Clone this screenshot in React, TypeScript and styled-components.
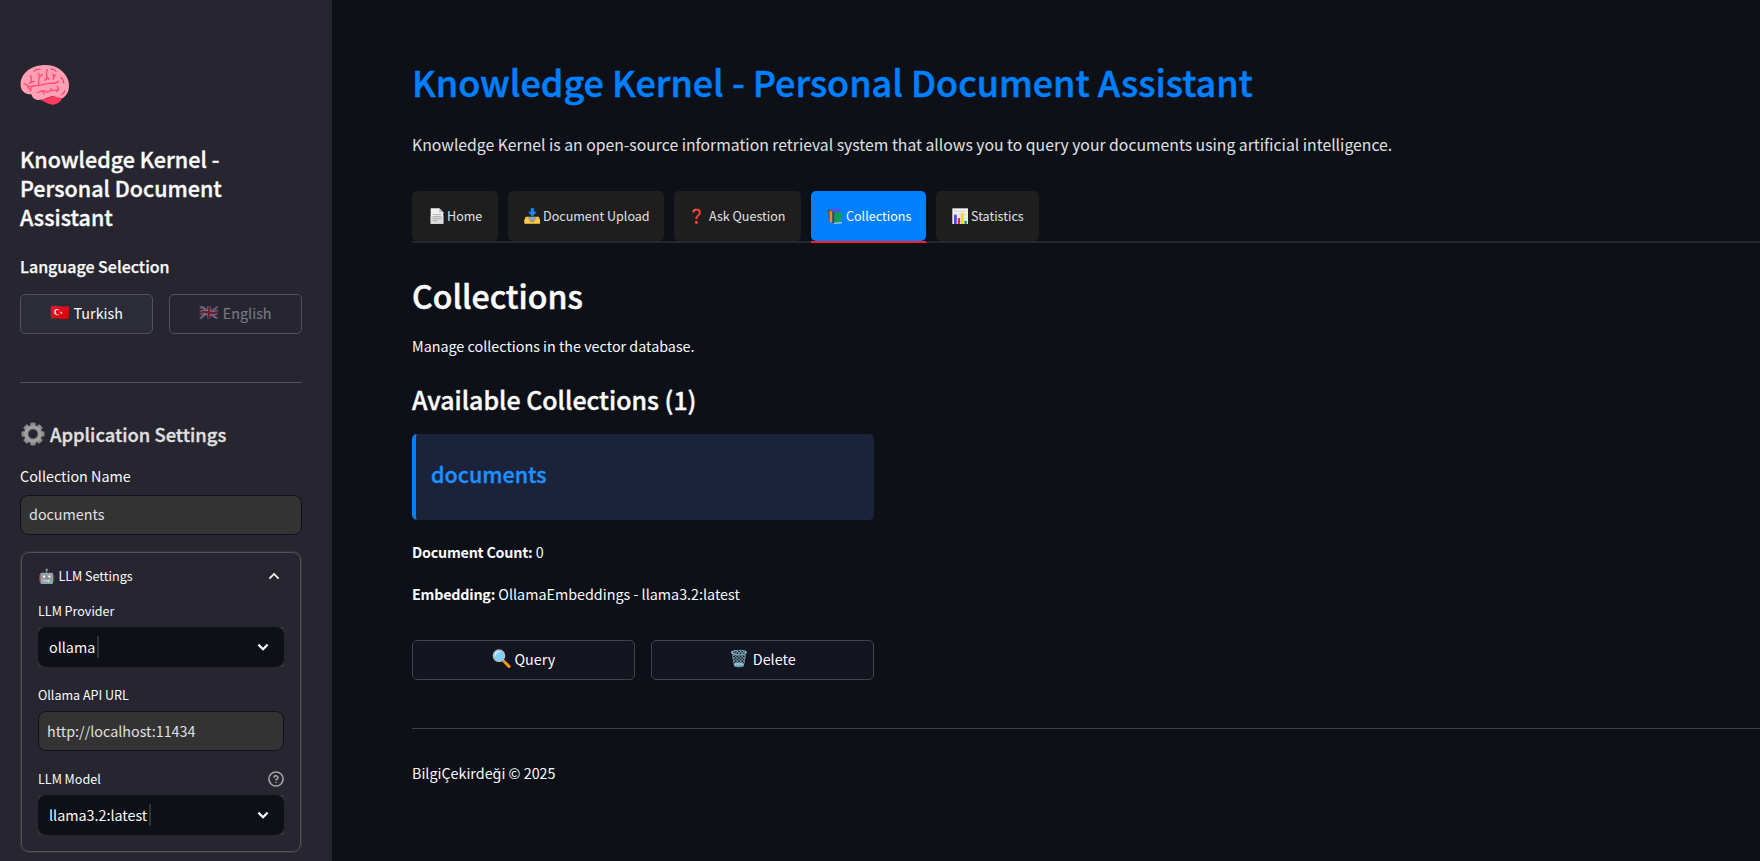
import React from 'react';
import styled, { createGlobalStyle } from 'styled-components';

const GlobalStyle = createGlobalStyle`
  * { box-sizing: border-box; }
  body {
    margin: 0;
    background: #0d1017;
    color: #fafafa;
    font-family: "Noto Sans CJK SC", "Noto Sans", sans-serif;
    overflow: hidden;
  }
  h1, h2, h3, h4, p { margin: 0; }
`;

const Page = styled.div`
  display: flex;
  width: 100%;
  height: 861px;
  overflow: hidden;
`;

const Sidebar = styled.aside`
  flex: 0 0 332px;
  height: 861px;
  padding: 56px 30px 0 20px;
  background: #272630;
`;

const Emoji = styled.span<{ $size: number }>`
  font-family: "Noto Color Emoji", sans-serif;
  font-size: ${(p) => p.$size}px;
  line-height: 1;
  font-weight: 400;
`;

const Logo = styled.div`
  height: 57px;
  display: flex;
  align-items: center;
`;

const SideTitle = styled.h1`
  margin-top: 32px;
  font-size: 21.5px;
  line-height: 28.8px;
  font-weight: 500;
  -webkit-text-stroke: 0.35px currentColor;
`;

const SideSubtitle = styled.h4`
  margin-top: 22.5px;
  font-size: 16px;
  line-height: 24px;
  font-weight: 500;
  -webkit-text-stroke: 0.25px currentColor;
`;

const ButtonRow = styled.div<{ $top: number; $width?: number }>`
  display: grid;
  grid-template-columns: 1fr 1fr;
  gap: 16px;
  width: ${(p) => (p.$width ? `${p.$width}px` : '100%')};
  margin-top: ${(p) => p.$top}px;
`;

const Button = styled.button<{ $tone: 'raised' | 'muted' | 'plain' }>`
  display: flex;
  align-items: center;
  justify-content: center;
  height: 40px;
  padding: 0 0 2px;
  border: 1px solid ${(p) => (p.$tone === 'plain' ? '#41434b' : '#52525c')};
  border-radius: 5px;
  background: ${(p) => (p.$tone === 'raised' ? '#2b2c36' : p.$tone === 'plain' ? '#131520' : 'transparent')};
  color: #fafafa;
  font-family: inherit;
  font-size: 14.33px;
  line-height: 24px;
`;

const ButtonLabel = styled.span<{ $muted?: boolean }>`
  display: flex;
  align-items: center;
  gap: 3.5px;
  opacity: ${(p) => (p.$muted ? 0.4 : 1)};
`;

const Divider = styled.hr<{ $color: string }>`
  height: 1px;
  margin: 48px 0 0;
  border: 0;
  background: ${(p) => p.$color};
`;

const SettingsTitle = styled.h3`
  display: flex;
  align-items: center;
  gap: 5px;
  margin: 37px 0 0 1px;
  font-size: 18.4px;
  line-height: 28px;
  font-weight: 500;
  -webkit-text-stroke: 0.3px currentColor;
  color: #e0e0e0;
`;

const Label = styled.label<{ $small?: boolean }>`
  display: flex;
  align-items: center;
  justify-content: space-between;
  font-size: ${(p) => (p.$small ? 12.55 : 14.33)}px;
  line-height: ${(p) => (p.$small ? 22 : 24)}px;
`;

const CollectionField = styled.div`
  display: flex;
  flex-direction: column;
  gap: 6.5px;
  margin-top: 16.5px;
`;

const TextInput = styled.div<{ $line?: number }>`
  height: 40px;
  padding: 0 8px;
  border: 1px solid #10121a;
  border-radius: 8px;
  background: #333;
  color: #e0e0e0;
  font-size: 14.33px;
  line-height: ${(p) => p.$line ?? 36}px;
`;

const Expander = styled.section`
  height: 302px;
  margin-top: 16px;
  border: 1px solid #333338;
  border-radius: 8px;
`;

const ExpanderBody = styled.div`
  height: 300px;
  padding: 12.5px 16px 0;
  border: 1px solid #52525b;
  border-radius: 8px;
`;

const ExpanderHeader = styled.div`
  display: flex;
  align-items: center;
  justify-content: space-between;
  padding-right: 4px;
  font-size: 12.55px;
  line-height: 22px;
`;

const Inline = styled.span`
  display: flex;
  align-items: center;
  gap: 3px;
`;

const Fields = styled.div`
  display: flex;
  flex-direction: column;
  gap: 17.5px;
  margin-top: 13px;
`;

const Field = styled.div`
  display: flex;
  flex-direction: column;
  gap: 4.5px;
`;

const SelectFrame = styled.div`
  height: 40px;
  background: #333;
`;

const SelectBox = styled.div`
  display: flex;
  align-items: center;
  height: 40px;
  padding: 0 15px 0 11px;
  border-radius: 8px;
  background: #0d1017;
  font-size: 14.33px;
  line-height: 24px;
`;

const Caret = styled.span`
  width: 2px;
  height: 22px;
  margin: 0 auto 0 2px;
  background: #333;
`;

const Main = styled.main`
  flex: 1;
  min-width: 0;
  padding: 57px 0 0 80px;
`;

const PageTitle = styled.h1`
  font-size: 35.9px;
  line-height: 48px;
  font-weight: 500;
  -webkit-text-stroke: 0.5px currentColor;
  color: #0080ff;
  white-space: nowrap;
`;

const Lead = styled.p`
  margin-top: 26px;
  font-size: 15.76px;
  line-height: 28px;
  color: #e0e0e0;
`;

const Tabs = styled.nav`
  display: flex;
  gap: 10px;
  margin-top: 32px;
  border-bottom: 2px solid #262730;
`;

const Tab = styled.div<{ $width: number; $active?: boolean }>`
  position: relative;
  display: flex;
  align-items: center;
  gap: 3px;
  width: ${(p) => p.$width}px;
  height: 50px;
  padding: 0 0 0 15px;
  border-radius: 5px;
  background: ${(p) => (p.$active ? '#0080ff' : '#1e1e1e')};
  color: ${(p) => (p.$active ? '#fff' : '#e0e0e0')};
  font-size: 12.55px;
  line-height: 22px;
  white-space: nowrap;
  &::after {
    content: '';
    display: ${(p) => (p.$active ? 'block' : 'none')};
    position: absolute;
    left: 0;
    right: 0;
    bottom: -2px;
    height: 2px;
    background: #ff1a2e;
  }
`;

const TabIcon = styled.span`
  display: flex;
  align-items: center;
  justify-content: flex-end;
  width: 17px;
  height: 17px;
`;

const SectionTitle = styled.h2`
  margin-top: 30.5px;
  font-size: 32.05px;
  line-height: 43px;
  font-weight: 500;
  -webkit-text-stroke: 0.5px currentColor;
`;

const Paragraph = styled.p<{ $top: number }>`
  margin-top: ${(p) => p.$top}px;
  font-size: 14.33px;
  line-height: 24px;
  strong { font-weight: 700; letter-spacing: -0.23px; }
`;

const ListTitle = styled.h3`
  margin-top: 24px;
  font-size: 24.9px;
  line-height: 34px;
  font-weight: 500;
  -webkit-text-stroke: 0.4px currentColor;
`;

const CollectionCard = styled.article`
  width: 462px;
  height: 86px;
  margin-top: 18px;
  padding: 25px 15px 0;
  border-left: 4px solid #0080ff;
  border-radius: 5px;
  background: #1a233a;
`;

const CardTitle = styled.h4`
  font-size: 21.5px;
  line-height: 29px;
  font-weight: 500;
  -webkit-text-stroke: 0.35px currentColor;
  color: #1e90ff;
`;

const Chevron = ({ up }: { up?: boolean }) => (
  <svg width="12" height="8" viewBox="0 0 12 8" fill="none" stroke="#fafafa" strokeWidth={up ? 1.7 : 2.2}>
    <path d={up ? 'M1.4 6.6 6 2l4.6 4.6' : 'M1.4 1.6 6 6.2l4.6-4.6'} />
  </svg>
);

const HelpIcon = () => (
  <svg width="16" height="16" viewBox="0 0 24 24" fill="none" stroke="#a3a3aa" strokeWidth="2.4" strokeLinecap="round" strokeLinejoin="round">
    <circle cx="12" cy="12" r="10.6" />
    <path d="M9.1 9a3 3 0 0 1 5.83 1c0 2-3 3-3 3" />
    <path d="M12 17h.01" />
  </svg>
);

const BrainIcon = () => (
  <svg width="50" height="42" viewBox="0 0 150 126" fill="none" strokeLinecap="round" strokeLinejoin="round">
    <path d="M62 108c18-10 44-12 66-10-4 14-16 23-30 24-14-1-22-8-36-14Z" fill="#ff3b63" />
    <path d="M60 106c20-14 45-12 68-8-14 4-24-2-34-1-10 4-18 14-34 9Z" fill="#e6001f" />
    <path d="M2 62C1 28 34 3 76 3c32 0 58 18 68 44 6 18 4 42-14 54-12 3-22-4-34-4-12 1-22 12-44 11-10-1-16-8-18-17C14 91 2 80 2 62Z" fill="#ffa0b4" />
    <g stroke="#ff4a78" strokeWidth="4">
      <path d="M12 60c4 0 8 2 10 5 3 6 3 10 10 14M22 66c8 4 22-2 32-2 12 0 22-6 34-6 12 1 24-2 28-6" />
      <path d="M32 80c0-8 6-14 12-15M31 34c3 5 4 12 3 20l-6 4M34 54l9-2" />
      <path d="M54 30c6 0 8 6 4 10-4 6-2 14-2 22M60 36l8-4M82 17c-4 6-2 14-2 22 1 6-2 8-6 9M80 39l7 7" />
      <path d="M98 30c4 4 4 10 2 16M100 38l7-5M42 22c4-5 12-7 18-6M94 15c6 0 11 3 14 7M122 40c6 4 9 9 9 17M124 92c6-2 9-6 10-12" />
      <path d="M52 86c8-2 10-6 16-6 6 0 8 5 14 4 6-2 10-6 18-5 6 1 10 0 14-2M72 90l-4-8M92 74l4 6M112 68l4 7-5 8" />
    </g>
  </svg>
);

const GearIcon = () => (
  <svg width="24" height="24" viewBox="-36 -36 72 72">
    <g fill="#8f8f8f" stroke="#666" strokeWidth="2">
      {[0, 45, 90, 135, 180, 225, 270, 315].map((a) => (
        <rect key={a} x="-8" y="-34" width="16" height="16" rx="4" transform={`rotate(${a})`} />
      ))}
    </g>
    <circle r="20.5" fill="none" stroke="#a0a0a0" strokeWidth="12" />
    <circle r="14.5" fill="none" stroke="#5c5c5c" strokeWidth="2.5" />
  </svg>
);

const PageIcon = () => (
  <svg width="14" height="16" viewBox="0 0 42 48">
    <path d="M2 1h26l12 12v34H2Z" fill="#f2f2f2" />
    <path d="M2 24h38v23H2Z" fill="#dcdcdc" />
    <path d="M28 1v12h12Z" fill="#b5b5b5" />
    <path d="M8 20h26M8 26h26M8 32h26M8 38h14" stroke="#a2a2a2" strokeWidth="2.5" />
  </svg>
);

const InboxIcon = () => (
  <svg width="16.5" height="16.5" viewBox="0 0 49 49">
    <path d="M5 26h39l4 12H1Z" fill="#ffc234" />
    <path d="M13 27h23v6l-6 6H19l-6-6Z" fill="#9aa3ab" />
    <path d="M1 34h13c2 8 19 8 21 0h13v13H1Z" fill="#ffca4a" />
    <path d="M20 1h10v10h8L25 26 12 11h8Z" fill="#1e88e5" />
  </svg>
);

const BooksIcon = () => (
  <svg width="16" height="16" viewBox="0 0 48 48">
    <path d="M12 3l24-2 6 10-26 2Z" fill="#5a4fe0" />
    <path d="M2 6l9-3 5 36-8 4Z" fill="#6b4a32" />
    <path d="M8 8l8 3v34l-8-4Z" fill="#f08a1c" />
    <path d="M16 12h8v32l-8 1Z" fill="#3f4a52" />
    <path d="M22 14l23-2v31l-23 1Z" fill="#0f9d58" />
    <path d="M22 44l23-1v3l-25 1Z" fill="#e8e2d0" />
  </svg>
);

const ChartIcon = () => (
  <svg width="16.5" height="16.5" viewBox="0 0 49 49">
    <path d="M1 1h47v47H1Z" fill="#f3f3f3" />
    <path d="M1 10h47M1 20h47M1 30h47M1 40h47M12 1v47M24 1v47M36 1v47" stroke="#d0d0d0" strokeWidth="1.5" />
    <path d="M6 20h8v28H6Z" fill="#4a4ae0" />
    <path d="M17 30h7v18h-7Z" fill="#f5222d" />
    <path d="M27 14h7v34h-7Z" fill="#f7d514" />
    <path d="M37 38h7v10h-7Z" fill="#0f9d58" />
  </svg>
);

const SearchIcon = () => (
  <svg width="19" height="19" viewBox="0 0 57 57">
    <path d="M35 36l16 16" stroke="#ff9800" strokeWidth="9" strokeLinecap="round" />
    <path d="M31 32l7 7" stroke="#8d9aa3" strokeWidth="6" />
    <circle cx="21" cy="20" r="17" fill="#7fd0fb" stroke="#b4bec5" strokeWidth="4" />
    <path d="M10 18a12 12 0 0 1 12-10" stroke="#d8f2ff" strokeWidth="4" fill="none" strokeLinecap="round" />
  </svg>
);

const tabs = [
  { icon: <PageIcon />, label: 'Home', width: 86 },
  { icon: <InboxIcon />, label: 'Document Upload', width: 156 },
  { icon: <Emoji $size={14}>❓</Emoji>, label: 'Ask Question', width: 127 },
  { icon: <BooksIcon />, label: 'Collections', width: 115, active: true },
  { icon: <ChartIcon />, label: 'Statistics', width: 103 },
];

export default function App() {
  return (
    <>
      <GlobalStyle />
      <Page>
        <Sidebar>
          <Logo><BrainIcon /></Logo>
          <SideTitle>Knowledge Kernel - Personal Document Assistant</SideTitle>
          <SideSubtitle>Language Selection</SideSubtitle>
          <ButtonRow $top={16}>
            <Button $tone="raised"><ButtonLabel><Emoji $size={16}>🇹🇷</Emoji>Turkish</ButtonLabel></Button>
            <Button $tone="muted"><ButtonLabel $muted><Emoji $size={16}>🇬🇧</Emoji>English</ButtonLabel></Button>
          </ButtonRow>
          <Divider $color="#52525b" />
          <SettingsTitle><GearIcon />Application Settings</SettingsTitle>
          <CollectionField>
            <Label>Collection Name</Label>
            <TextInput>documents</TextInput>
          </CollectionField>
          <Expander>
            <ExpanderBody>
              <ExpanderHeader>
                <Inline><Emoji $size={14}>🤖</Emoji>LLM Settings</Inline>
                <Chevron up />
              </ExpanderHeader>
              <Fields>
                <Field>
                  <Label $small>LLM Provider</Label>
                  <SelectFrame><SelectBox>ollama<Caret /><Chevron /></SelectBox></SelectFrame>
                </Field>
                <Field>
                  <Label $small>Ollama API URL</Label>
                  <TextInput $line={38}>http://localhost:11434</TextInput>
                </Field>
                <Field>
                  <Label $small>LLM Model<HelpIcon /></Label>
                  <SelectFrame><SelectBox>llama3.2:latest<Caret /><Chevron /></SelectBox></SelectFrame>
                </Field>
              </Fields>
            </ExpanderBody>
          </Expander>
        </Sidebar>
        <Main>
          <PageTitle>Knowledge Kernel - Personal Document Assistant</PageTitle>
          <Lead>Knowledge Kernel is an open-source information retrieval system that allows you to query your documents using artificial intelligence.</Lead>
          <Tabs>
            {tabs.map((t) => (
              <Tab key={t.label} $width={t.width} $active={t.active}>
                <TabIcon>{t.icon}</TabIcon>{t.label}
              </Tab>
            ))}
          </Tabs>
          <SectionTitle>Collections</SectionTitle>
          <Paragraph $top={17}>Manage collections in the vector database.</Paragraph>
          <ListTitle>Available Collections (1)</ListTitle>
          <CollectionCard><CardTitle>documents</CardTitle></CollectionCard>
          <Paragraph $top={20}><strong>Document Count:</strong> 0</Paragraph>
          <Paragraph $top={18}><strong>Embedding:</strong> OllamaEmbeddings - llama3.2:latest</Paragraph>
          <ButtonRow $top={34} $width={462}>
            <Button $tone="plain"><ButtonLabel><SearchIcon />Query</ButtonLabel></Button>
            <Button $tone="plain"><ButtonLabel><Emoji $size={16}>🗑️</Emoji>Delete</ButtonLabel></Button>
          </ButtonRow>
          <Divider $color="#3d4046" />
          <Paragraph $top={32}>BilgiÇekirdeği © 2025</Paragraph>
        </Main>
      </Page>
    </>
  );
}
